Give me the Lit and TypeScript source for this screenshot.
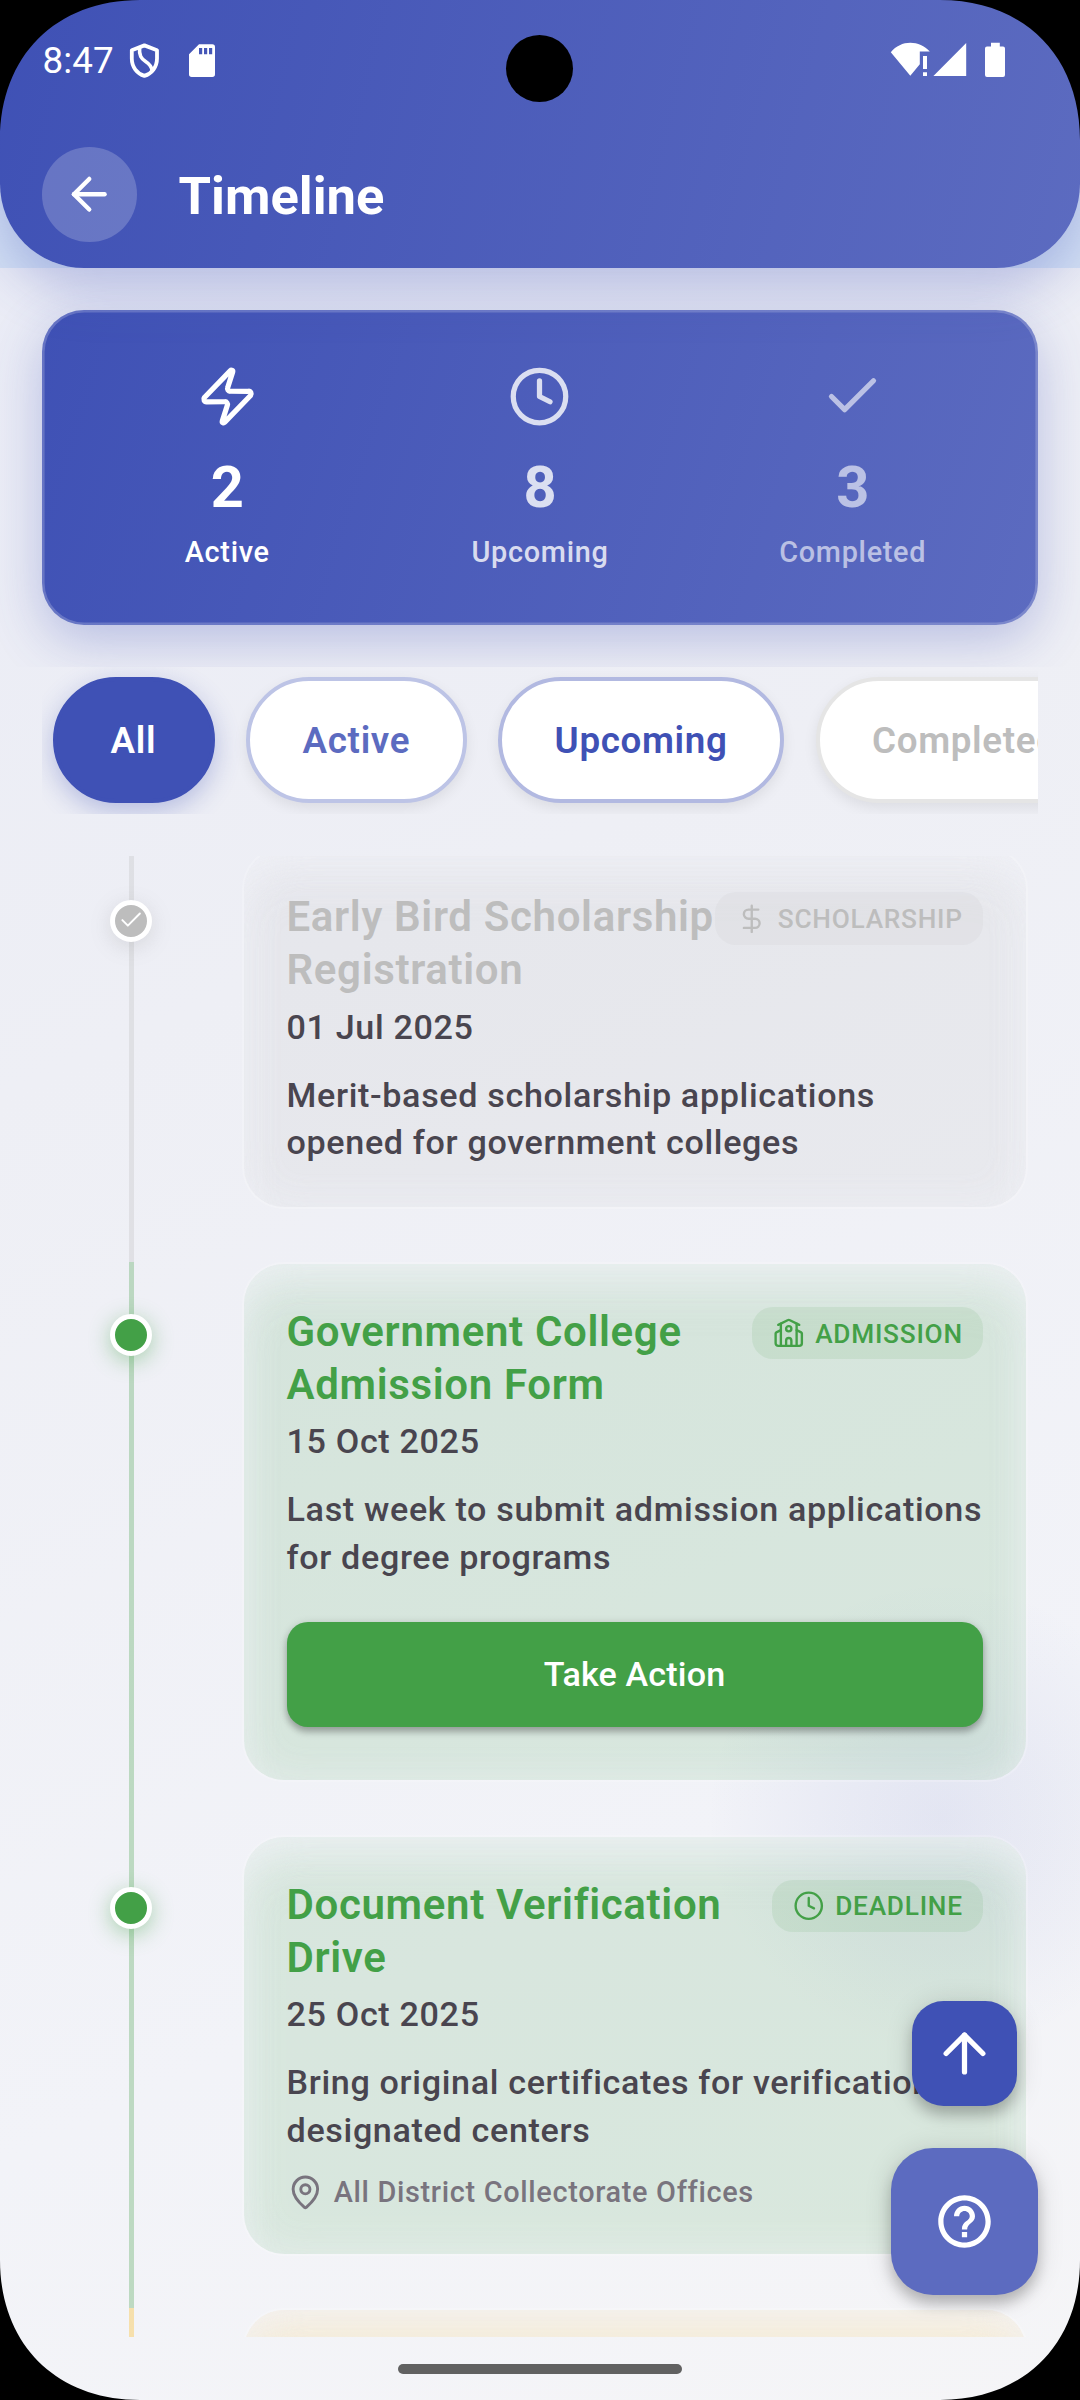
import { LitElement, html, css, svg, nothing } from "lit";
import { customElement, property } from "lit/decorators.js";
import { classMap } from "lit/directives/class-map.js";

const ICONS = {
  back: svg`<path d="m12 19-7-7 7-7"/><path d="M19 12H5"/>`,
  up: svg`<path d="m5 12 7-7 7 7"/><path d="M12 19V5"/>`,
  zap: svg`<path d="M4 14a1 1 0 0 1-.78-1.63l9.9-10.2a.5.5 0 0 1 .86.46l-1.92 6.02A1 1 0 0 0 13 10h7a1 1 0 0 1 .78 1.63l-9.9 10.2a.5.5 0 0 1-.86-.46l1.92-6.02A1 1 0 0 0 11 14z"/>`,
  clock: svg`<circle cx="12" cy="12" r="10"/><path d="M12 6v6l4 2"/>`,
  check: svg`<path d="M20 6 9 17l-5-5"/>`,
  dollar: svg`<path d="M12 2v20"/><path d="M17 5H9.5a3.5 3.5 0 0 0 0 7h5a3.5 3.5 0 0 1 0 7H6"/>`,
  school: svg`<path d="M14 22v-4a2 2 0 1 0-4 0v4"/><path d="m18 10 3.447 1.724a1 1 0 0 1 .553.894V20a2 2 0 0 1-2 2H4a2 2 0 0 1-2-2v-7.382a1 1 0 0 1 .553-.894L6 10"/><path d="M18 5v17"/><path d="m4 6 7.106-3.553a2 2 0 0 1 1.788 0L20 6"/><path d="M6 5v17"/><circle cx="12" cy="9" r="2"/>`,
  pin: svg`<path d="M20 10c0 4.993-5.539 10.193-7.399 11.799a1 1 0 0 1-1.202 0C9.539 20.193 4 14.993 4 10a8 8 0 0 1 16 0"/><circle cx="12" cy="10" r="3"/>`,
};
type IconName = keyof typeof ICONS;

@customElement("ui-icon")
class UiIcon extends LitElement {
  @property() name: IconName = "clock";
  static styles = css`
    :host { display: block; flex: none; }
    .glyph {
      display: block; width: 100%; height: 100%;
      fill: none; stroke: currentColor; stroke-width: var(--icon-stroke, 2);
      stroke-linecap: round; stroke-linejoin: round;
    }
  `;
  render() {
    return html`<svg class="glyph" viewBox="0 0 24 24">${ICONS[this.name]}</svg>`;
  }
}

interface Milestone {
  tone: "done" | "live" | "soon";
  title: string;
  date: string;
  text: string;
  badge: string;
  icon: IconName;
  action?: string;
  place?: string;
}

const MILESTONES: Milestone[] = [
  {
    tone: "done", title: "Early Bird Scholarship\nRegistration", date: "01 Jul 2025",
    text: "Merit-based scholarship applications\nopened for government colleges",
    badge: "SCHOLARSHIP", icon: "dollar",
  },
  {
    tone: "live", title: "Government College\nAdmission Form", date: "15 Oct 2025",
    text: "Last week to submit admission applications\nfor degree programs",
    badge: "ADMISSION", icon: "school", action: "Take Action",
  },
  {
    tone: "live", title: "Document Verification\nDrive", date: "25 Oct 2025",
    text: "Bring original certificates for verification at\ndesignated centers",
    badge: "DEADLINE", icon: "clock", place: "All District Collectorate Offices",
  },
];

@customElement("timeline-item")
class TimelineItem extends LitElement {
  @property({ attribute: false }) item!: Milestone;
  static styles = css`
    :host { display: block; }
    .item { display: grid; grid-template-columns: 178.5px 786px; column-gap: 21px; padding-left: 42px; }
    .done { --ink: #bdbdbd; --line: rgba(189, 189, 189, 0.3); --fill: rgba(189, 189, 189, 0.15); --chip: rgba(189, 189, 189, 0.12); --glow: rgba(120, 120, 120, 0.2); }
    .live { --ink: #43a047; --line: rgba(67, 160, 71, 0.3); --fill: rgba(67, 160, 71, 0.15); --chip: rgba(67, 160, 71, 0.1); --glow: rgba(67, 160, 71, 0.42); }
    .rail { display: grid; justify-items: center; }
    .line { grid-area: 1 / 1; width: 5.5px; background: var(--line); }
    .dot {
      grid-area: 1 / 1; box-sizing: border-box; width: 42px; height: 42px; margin-top: 52.5px;
      border: 5.25px solid #fff; border-radius: 50%; background: var(--ink); color: #fff;
      box-shadow: 0 5px 21px var(--glow);
      display: flex; align-items: center; justify-content: center;
    }
    .dot ui-icon { width: 26.25px; height: 26.25px; --icon-stroke: 1.8; }
    .card {
      box-sizing: border-box; border: 2.6px solid rgba(255, 255, 255, 0.2); border-radius: 42px;
      padding: 43px; margin-bottom: 52.5px; background: var(--fill); background-clip: padding-box;
      box-shadow: inset 0 4px 44px rgba(243, 244, 249, 0.55), inset 0 36px 44px -16px rgba(243, 244, 249, 0.5);
    }
    .head { display: flex; justify-content: space-between; align-items: flex-start; height: 104px; }
    .title { margin: -2px 0 0; font-size: 42px; font-weight: 600; line-height: 53px; letter-spacing: 0.66px; color: var(--ink); white-space: pre; }
    .badge {
      display: flex; align-items: center; gap: 10.5px; height: 52.5px; padding: 0 19.7px 0 21px; border-radius: 21px;
      background: var(--chip); color: var(--ink); font-size: 26.25px; font-weight: 460; letter-spacing: 0.75px;
    }
    .badge span { padding-top: 1px; }
    .badge ui-icon { width: 31.5px; height: 31.5px; --icon-stroke: 1.8; }
    .date { margin: 10.5px 0 0; font-size: 34.125px; font-weight: 500; line-height: 40px; letter-spacing: 0.66px; color: #49454f; }
    .text { margin: 25px 0 -2.8px; font-size: 34.125px; font-weight: 500; line-height: 47.8px; letter-spacing: 0.66px; color: #49454f; white-space: pre; }
    .action {
      display: flex; align-items: center; justify-content: center; height: 105px; margin: 42.5px 0 10.5px;
      border-radius: 21px; background: var(--ink); color: #fff;
      font-size: 34.125px; font-weight: 500; letter-spacing: 0.15px;
      box-shadow: 0 5px 7px rgba(0, 0, 0, 0.26), 0 1px 10px rgba(0, 0, 0, 0.12);
    }
    .place { display: flex; align-items: center; gap: 10.5px; margin-top: 22px; color: #79747e; font-size: 28.875px; font-weight: 500; line-height: 36.75px; letter-spacing: 0.68px; }
    .place ui-icon { width: 36.75px; height: 36.75px; --icon-stroke: 1.9; }
  `;
  render() {
    const m = this.item;
    return html`
      <article class=${classMap({ item: true, [m.tone]: true })}>
        <div class="rail">
          <div class="line"></div>
          <div class="dot">${m.tone === "done" ? html`<ui-icon name="check"></ui-icon>` : nothing}</div>
        </div>
        <div class="card">
          <div class="head">
            <h2 class="title">${m.title}</h2>
            <div class="badge"><ui-icon name=${m.icon}></ui-icon><span>${m.badge}</span></div>
          </div>
          <p class="date">${m.date}</p>
          <p class="text">${m.text}</p>
          ${m.action ? html`<div class="action">${m.action}</div>` : nothing}
          ${m.place ? html`<div class="place"><ui-icon name="pin"></ui-icon><span>${m.place}</span></div>` : nothing}
        </div>
      </article>
    `;
  }
}

const STATS: { icon: IconName; count: number; label: string; tone: string }[] = [
  { icon: "zap", count: 2, label: "Active", tone: "full" },
  { icon: "clock", count: 8, label: "Upcoming", tone: "mid" },
  { icon: "check", count: 3, label: "Completed", tone: "low" },
];
const FILTERS = [
  { label: "All", tone: "selected" },
  { label: "Active", tone: "active" },
  { label: "Upcoming", tone: "upcoming" },
  { label: "Completed", tone: "completed" },
];

@customElement("app-root")
class AppRoot extends LitElement {
  static styles = css`
    :host { display: block; width: 1080px; height: 2400px; font-family: Roboto, "Liberation Sans", sans-serif; }
    .screen {
      position: relative; display: flex; flex-direction: column; width: 1080px; height: 2400px; overflow: hidden;
      background:
        linear-gradient(#d3dff4, #d3e0f4) 0 0 / 100% 268px no-repeat,
        radial-gradient(circle 236px at 942px 1818px, rgba(63, 81, 181, 0.085), rgba(63, 81, 181, 0.05) 45%, rgba(63, 81, 181, 0)),
        linear-gradient(155.8deg, #e9ebf6, #eeeff5 38%, #f2f3f8 75%, #f5f5f7);
    }
    .header {
      flex: none; box-sizing: border-box; height: 268px; z-index: 1;
      border-radius: 0 0 84px 84px; background: linear-gradient(103.9deg, #3f51b5, #5c6bc0);
      box-shadow: 0 21px 52px rgba(63, 81, 181, 0.3);
      display: flex; flex-direction: column;
    }
    .status { display: flex; align-items: flex-start; height: 147px; padding: 0 72px 0 42.5px; box-sizing: border-box; color: #fff; }
    .time { width: 83.5px; margin-top: 38.5px; font-size: 36.75px; line-height: 43px; letter-spacing: 0.1px; white-space: nowrap; }
    .left-icons { width: 96px; height: 42px; margin-top: 40px; margin-right: auto; }
    .right-icons { width: 120px; height: 42px; margin-top: 40px; }
    .bar { display: flex; align-items: center; gap: 42px; padding-left: 42px; height: 94.5px; }
    .back { display: flex; align-items: center; justify-content: center; width: 94.5px; height: 94.5px; border-radius: 50%; background: rgba(255, 255, 255, 0.2); color: #fff; }
    .back ui-icon { width: 52.5px; height: 52.5px; }
    .heading { margin: 3px 0 0; font-size: 52.5px; font-weight: 700; line-height: 62px; letter-spacing: 0; color: #fff; }
    .camera { position: absolute; z-index: 3; left: 506px; top: 35px; width: 67px; height: 67px; border-radius: 50%; background: #000; }

    .summary { flex: none; height: 399px; box-sizing: border-box; padding: 42px 42px 0; overflow: hidden; }
    .stats {
      position: relative; box-sizing: border-box; height: 315px; border-radius: 42px; padding: 55px 28.9px 0;
      background: linear-gradient(107.5deg, #3f51b5, #5c6bc0);
      box-shadow: inset 0 0 0 2.6px rgba(255, 255, 255, 0.2), 0 16px 52px rgba(63, 81, 181, 0.3);
      display: grid; grid-template-columns: repeat(3, 1fr); align-items: start;
    }
    .stat { display: flex; flex-direction: column; align-items: center; color: #fff; }
    .mid { color: rgba(255, 255, 255, 0.8); }
    .low { color: rgba(255, 255, 255, 0.6); }
    .stat ui-icon { width: 63px; height: 63px; }
    .count { margin-top: 24.5px; font-size: 57.75px; font-weight: 700; line-height: 68px; }
    .label { margin-top: 14px; font-size: 28.875px; font-weight: 500; line-height: 34px; letter-spacing: 0.7px; }

    .filters { flex: none; display: flex; gap: 31.5px; height: 147px; box-sizing: border-box; margin: 0 42px; padding: 10px 10.5px; overflow: hidden; }
    .chip {
      flex: none; box-sizing: border-box; height: 126px; border-radius: 63px; padding: 0 52.5px; border: 4px solid transparent;
      display: flex; align-items: center; font-size: 36.75px; font-weight: 600; letter-spacing: 0.66px; white-space: nowrap;
      background: #fff; box-shadow: 0 5px 14px rgba(0, 0, 0, 0.08);
    }
    .selected { padding: 0 54.5px 0 54px; background: #3f51b5; border-color: #3f51b5; color: #fff; box-shadow: 0 8px 26px rgba(63, 81, 181, 0.32); }
    .active { border-color: #bdc4e6; color: #5c6bc0; }
    .upcoming { border-color: #b2b9e1; color: #3f51b5; }
    .completed { border-color: #e5e5e5; color: #bdbdbd; }

    .list { flex: none; height: 1481px; margin-top: 42px; overflow: hidden; }
    .items { margin-top: -9px; }
    .next { display: grid; grid-template-columns: 178.5px 786px; column-gap: 21px; padding-left: 42px; }
    .next-line { justify-self: center; width: 5.5px; height: 120px; background: rgba(255, 179, 0, 0.3); }
    .next-card { box-sizing: border-box; height: 300px; border: 2.6px solid rgba(255, 255, 255, 0.2); border-radius: 42px; background: rgba(255, 179, 0, 0.15); background-clip: padding-box; box-shadow: inset 0 4px 44px rgba(243, 244, 249, 0.55), inset 0 36px 44px -16px rgba(243, 244, 249, 0.5); }

    .fabs { position: absolute; z-index: 2; right: 42px; top: 2001px; display: flex; flex-direction: column; align-items: center; gap: 42px; color: #fff; }
    .fab { display: flex; align-items: center; justify-content: center; box-shadow: 0 9px 13px rgba(0, 0, 0, 0.2), 0 3px 28px rgba(0, 0, 0, 0.14); }
    .to-top { width: 105px; height: 105px; border-radius: 31.5px; background: #3f51b5; }
    .help { width: 147px; height: 147px; border-radius: 42px; background: #5c6bc0; }
    .fab ui-icon, .help-icon { width: 63px; height: 63px; }
    .handle { width: 284px; height: 10px; margin: 27px auto 0; border-radius: 5px; background: #616161; }
    .corners { position: absolute; z-index: 4; inset: 0; width: 1080px; height: 2400px; pointer-events: none; }
  `;
  render() {
    return html`
      <main class="screen">
        <header class="header">
          <div class="status">
            <div class="time">8:47</div>
            <svg class="left-icons" viewBox="126 40 96 42">
              <path d="M144.4 45.4 L157 50.2 V58.5 C157 67 151.8 73.6 144.4 75.9 C137 73.6 131.8 67 131.8 58.5 V50.2 Z" fill="none" stroke="#fff" stroke-width="3.8" stroke-linejoin="round"/>
              <path d="M139.6 47.6 C139 55.5 141.2 58.6 145.6 61.4 C149.6 64 151.8 66.4 152.2 71" fill="none" stroke="#fff" stroke-width="3.6"/>
              <path fill="#fff" fill-rule="evenodd" d="M199 44.3H212.3a2.7 2.7 0 0 1 2.7 2.7V74.3a2.7 2.7 0 0 1-2.7 2.7H191.7a2.7 2.7 0 0 1-2.7-2.7V54.2Z M199 48V54.2H202.2V48Z M204 48V54.2H207.2V48Z M209 48V54.2H212.2V48Z"/>
            </svg>
            <svg class="right-icons" viewBox="888 40 120 42">
              <path fill="#fff" d="M890.8 52.2C896 46 903 42.8 910.3 42.8S924.6 46 929.8 51.4H919.8V64.2L910.3 75.8Z"/>
              <path fill="#fff" d="M923 56h4v13h-4Z M923 72.2h4v3.8h-4Z M966.2 43V76H933.4Z"/>
              <path fill="#fff" d="M991 42.8h8.8V46.4H1003a2 2 0 0 1 2 2V75a2 2 0 0 1-2 2H987a2 2 0 0 1-2-2V48.4a2 2 0 0 1 2-2h4Z"/>
            </svg>
          </div>
          <div class="bar">
            <div class="back"><ui-icon name="back"></ui-icon></div>
            <h1 class="heading">Timeline</h1>
          </div>
        </header>

        <section class="summary">
          <div class="stats">
            ${STATS.map((s) => html`
              <div class="stat ${s.tone}">
                <ui-icon name=${s.icon}></ui-icon>
                <div class="count">${s.count}</div>
                <div class="label">${s.label}</div>
              </div>`)}
          </div>
        </section>

        <nav class="filters">
          ${FILTERS.map((f) => html`<div class="chip ${f.tone}">${f.label}</div>`)}
        </nav>

        <section class="list">
          <div class="items">
            ${MILESTONES.map((m) => html`<timeline-item .item=${m}></timeline-item>`)}
            <div class="next">
              <div class="next-line"></div>
              <div class="next-card"></div>
            </div>
          </div>
        </section>
        <div class="handle"></div>

        <div class="fabs">
          <div class="fab to-top"><ui-icon name="up"></ui-icon></div>
          <div class="fab help">
            <svg class="help-icon" viewBox="0 0 24 24" fill="#fff">
              <path d="M11 18h2v-2h-2v2zm1-16C6.48 2 2 6.48 2 12s4.48 10 10 10 10-4.48 10-10S17.52 2 12 2zm0 18c-4.41 0-8-3.59-8-8s3.59-8 8-8 8 3.59 8 8-3.59 8-8 8zm0-14c-2.21 0-4 1.79-4 4h2c0-1.1.9-2 2-2s2 .9 2 2c0 2-3 1.75-3 5h2c0-2.25 3-2.5 3-5 0-2.21-1.79-4-4-4z"/>
            </svg>
          </div>
        </div>
        <div class="camera"></div>
        <svg class="corners" viewBox="0 0 1080 2400">
          <path d="M0 0H140C56 0 0 56 0 140Z"/>
          <path d="M1080 0H940C1024 0 1080 56 1080 140Z"/>
          <path d="M0 2400H140C56 2400 0 2344 0 2260Z"/>
          <path d="M1080 2400H940C1024 2400 1080 2344 1080 2260Z"/>
        </svg>
      </main>
    `;
  }
}
